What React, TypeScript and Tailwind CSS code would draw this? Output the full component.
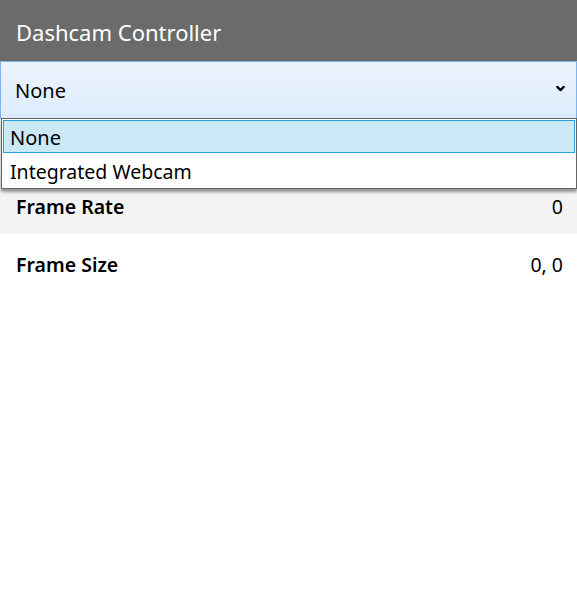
import { ChevronDown } from 'lucide-react';

const rows = [
    { label: '', value: '' },
    { label: 'Frame Rate', value: '0' },
    { label: 'Frame Size', value: '0, 0' },
];

export default function App() {
    return (
        <div className="w-[577px] h-[606px] bg-white font-['Noto_Sans',sans-serif] text-black overflow-hidden">
            <header className="h-[61px] bg-[#6b6b6b] flex items-center px-4 pt-[2px]">
                <h1 className="text-[22px] text-white leading-none">Dashcam Controller</h1>
            </header>

            <div className="relative">
                <div className="h-[58px] border border-[#7eb4ea] bg-gradient-to-b from-[#ecf4fc] to-[#dcecfc] flex items-center justify-between pl-[14px] pr-[9px] pt-[2px]">
                    <span className="text-[20px]">None</span>
                    <ChevronDown size={13} strokeWidth={4} className="-mt-[6px]" />
                </div>

                <div>
                    {rows.map((row, i) => (
                        <div
                            key={i}
                            className={
                                i % 2 === 1
                                    ? 'h-[57px] bg-[#f4f4f4] flex items-center justify-between pl-4 pr-[14px] pt-[2px] text-[19.5px]'
                                    : 'h-[58px] bg-white flex items-center justify-between pl-4 pr-[14px] pt-[3px] text-[19.5px]'
                            }
                        >
                            <span className="font-semibold">{row.label}</span>
                            <span>{row.value}</span>
                        </div>
                    ))}
                </div>

                <div className="absolute top-[57px] left-[1px] right-0 bg-white border border-[#646464] p-[1px] shadow-[0_3px_3px_rgba(0,0,0,0.4)]">
                    <div className="h-[33px] bg-[#cbe8f6] border border-[#26a0da] flex items-center pl-[6px] pt-[3px] text-[20px]">None</div>
                    <div className="h-[34px] flex items-center pl-[7px] pt-[3px] text-[19.5px]">Integrated Webcam</div>
                </div>
            </div>
        </div>
    );
}
